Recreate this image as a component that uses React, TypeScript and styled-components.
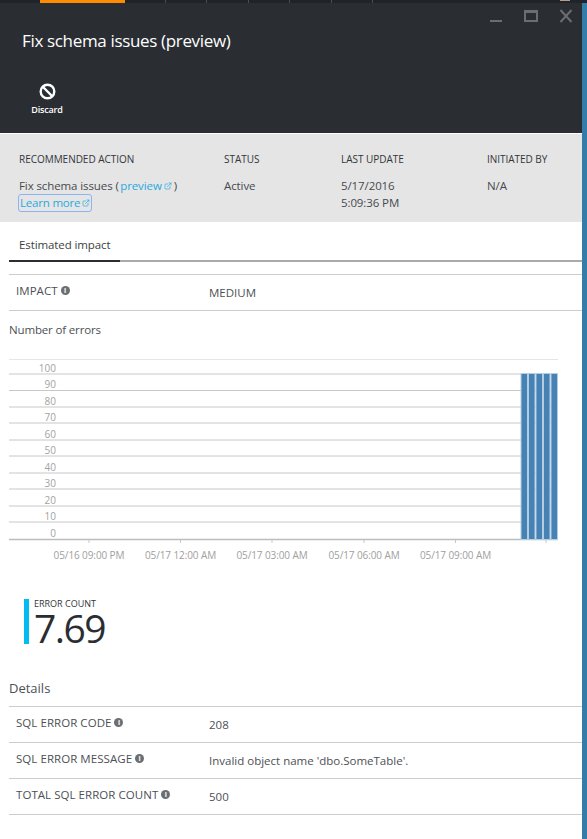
import React from 'react';
import styled, { createGlobalStyle } from 'styled-components';
import { ExternalLink } from 'lucide-react';

const GlobalStyle = createGlobalStyle`
  html, body {
    margin: 0;
    padding: 0;
    background: #fff;
  }
  body {
    font-family: "Open Sans", "Liberation Sans", sans-serif;
    color: #3c3f42;
  }
`;

const Page = styled.div`
  width: 587px;
  height: 839px;
  overflow: hidden;
  display: flex;
  flex-direction: column;
`;

// strip of the portal's tab bar above the blade
const TopStrip = styled.div`
  height: 3px;
  flex: none;
  background: #1f2429;
  display: flex;
  padding-left: 40px;
`;

const TopActive = styled.div`
  width: 85px;
  background: #ff8c00;
  margin-right: 40px;
`;

const TopTick = styled.div`
  width: 40px;
  margin-right: 0.4px;
  border-left: 1px solid #4a4f54;
`;

const TopAvatar = styled.div`
  width: 10px;
  height: 1px;
  margin: 0 17px 0 auto;
  background: #b89a8a;
`;

const Blade = styled.div`
  flex: 1;
  display: grid;
  grid-template-columns: 582px 5px;
  min-height: 0;
`;

const EdgeStrip = styled.div`
  background: #347da8;
`;

const Main = styled.div`
  display: flex;
  flex-direction: column;
  min-width: 0;
`;

const Header = styled.header`
  height: 130px;
  background: #2a2e32;
  color: #fff;
  position: relative;
  padding: 27px 0 0 22px;
  box-sizing: border-box;
`;

const Title = styled.h1`
  margin: 0;
  font-size: 17px;
  line-height: 22px;
  font-weight: 400;
  letter-spacing: -0.34px;
`;

const WindowButtons = styled.div`
  position: absolute;
  top: 6px;
  right: 9px;
  display: flex;
  align-items: flex-start;
  gap: 21px;
`;

const CommandButton = styled.div`
  margin: 31px 0 0 3px;
  width: 44px;
  display: flex;
  flex-direction: column;
  align-items: center;
  gap: 4px;
`;

const CommandLabel = styled.span`
  font-size: 9px;
  line-height: 12px;
  font-weight: 600;
  letter-spacing: -0.15px;
`;

const Summary = styled.section`
  height: 88px;
  margin-top: 1px;
  background: #e5e5e5;
  box-sizing: border-box;
  padding: 19px 0 0 19px;
  display: grid;
  grid-template-columns: 205px 117px 146px 1fr;
  align-content: start;
`;

const SummaryColumn = styled.div`
  display: flex;
  flex-direction: column;
`;

const SummaryLabel = styled.div`
  font-size: 10px;
  line-height: 13px;
  color: #32363a;
  letter-spacing: -0.03px;
  margin-bottom: 11px;
`;

const SummaryValue = styled.div`
  font-size: 11.5px;
  line-height: 17px;
  color: #454a4f;
  letter-spacing: -0.1px;
  white-space: nowrap;
`;

const LinkText = styled.span`
  color: #27a9e1;
  display: inline-flex;
  align-items: center;
  gap: 2px;
  margin: 0 2px 0 1.5px;
`;

const FocusLink = styled.span`
  color: #27a9e1;
  display: inline-flex;
  align-items: center;
  gap: 2px;
  outline: 1.5px solid #8cb4f2;
  border-radius: 2px;
  padding: 0 1px 0 1px;
  height: 16px;
  letter-spacing: -0.2px;
`;

const Content = styled.div`
  padding-left: 9px;
  flex: 1;
  background: #fff;
`;

const TabBar = styled.div`
  height: 40px;
  box-sizing: border-box;
  border-bottom: 2px solid #aaaaaa;
  display: flex;
  margin-bottom: 12px;
`;

const Tab = styled.div`
  width: 111px;
  height: 40px;
  box-sizing: border-box;
  padding: 14px 0 0 10px;
  border-bottom: 2px solid #2a2e32;
  font-size: 11.5px;
  line-height: 17px;
  color: #3c3f42;
  letter-spacing: -0.1px;
`;

const Row = styled.div`
  height: 36px;
  box-sizing: border-box;
  border-bottom: 1px solid #cccccc;
  display: grid;
  grid-template-columns: 193px 1fr;
  align-items: start;
  padding-left: 7px;
`;

const RowsTop = styled.div`
  border-top: 1px solid #cccccc;
`;

const RowLabel = styled.div`
  margin-top: 7px;
  font-size: 11.5px;
  line-height: 17px;
  color: #4c5055;
  letter-spacing: 0.05px;
  display: flex;
  align-items: center;
  gap: 3px;
`;

const RowValue = styled.div`
  margin-top: 9px;
  font-size: 11.5px;
  line-height: 17px;
  color: #4c5055;
`;

const InfoDot = styled.span`
  width: 9px;
  height: 9px;
  border-radius: 50%;
  background: #6b6f73;
  color: #fff;
  font-size: 7px;
  line-height: 9px;
  font-weight: 700;
  text-align: center;
  letter-spacing: 0;
`;

const ErrorsTitle = styled.h2`
  margin: 10px 0 0;
  font-size: 11.5px;
  line-height: 17px;
  font-weight: 400;
  color: #4c5055;
  letter-spacing: -0.15px;
`;

const ChartSvg = styled.svg`
  display: block;
  margin-top: 17px;
`;

const Kpi = styled.div`
  margin: 34px 0 0 15px;
  height: 45px;
  border-left: 5px solid #00bcf2;
  padding-left: 5px;
  display: flex;
  flex-direction: column;
`;

const KpiLabel = styled.div`
  font-size: 9px;
  line-height: 10px;
  color: #32363a;
`;

const KpiValue = styled.div`
  font-size: 39px;
  line-height: 37px;
  font-weight: 500;
  color: #2a2e32;
  letter-spacing: -1.5px;
`;

const DetailsTitle = styled.h2`
  margin: 36px 0 9px;
  font-size: 13px;
  line-height: 17px;
  font-weight: 400;
  color: #4c5055;
`;

const gridYs = [374, 390.5, 407, 423, 440, 456, 473, 489, 506, 522];
const yLabels = ['100', '90', '80', '70', '60', '50', '40', '30', '20', '10', '0'];
const xTicks = [
  { x: 89, label: '05/16 09:00 PM' },
  { x: 180.5, label: '05/17 12:00 AM' },
  { x: 272, label: '05/17 03:00 AM' },
  { x: 364, label: '05/17 06:00 AM' },
  { x: 455.5, label: '05/17 09:00 AM' },
  { x: 546, label: '' },
];
const barXs = [521, 528.5, 536, 543.5, 551];

// chart is drawn in page x/y coordinates, viewBox maps them onto the svg
const Chart = () => {
  const top = 355;
  return (
    <ChartSvg width={573} height={210} viewBox={`9 ${top} 573 210`}>
      <line x1={9} x2={558} y1={359.5} y2={359.5} stroke="#e6e6e6" />
      {gridYs.map((y) => (
        <line key={y} x1={9} x2={558} y1={y} y2={y} stroke="#c8c8c8" />
      ))}
      <line x1={9} x2={558} y1={539.5} y2={539.5} stroke="#bdbdbd" strokeWidth={1.5} />
      {yLabels.map((label, i) => (
        <text
          key={label}
          x={56}
          y={372 + i * 16.45}
          textAnchor="end"
          fontSize={10}
          fill="#a3a3a3"
          fontFamily="Open Sans, sans-serif"
        >
          {label}
        </text>
      ))}
      {barXs.map((x) => (
        <rect key={x} x={x} y={373.5} width={6.5} height={166} fill="#4682b4" stroke="#b4cde3" strokeWidth={1} />
      ))}
      {xTicks.map((t) => (
        <g key={t.x}>
          <line x1={t.x} x2={t.x} y1={540} y2={543} stroke="#c8c8c8" />
          {t.label && (
            <text
              x={t.x}
              y={559}
              textAnchor="middle"
              fontSize={10}
              letterSpacing={-0.1}
              fill="#a0a0a0"
              fontFamily="Open Sans, sans-serif"
            >
              {t.label}
            </text>
          )}
        </g>
      ))}
    </ChartSvg>
  );
};

const Info = () => <InfoDot>i</InfoDot>;

const App = () => (
  <>
    <GlobalStyle />
    <Page>
      <TopStrip>
        <TopActive />
        {[0, 1, 2, 3, 4, 5].map((i) => (
          <TopTick key={i} />
        ))}
        <TopAvatar />
      </TopStrip>
      <Blade>
        <Main>
          <Header>
            <Title>Fix schema issues (preview)</Title>
            <WindowButtons>
              <svg width="14" height="14" viewBox="0 0 14 14">
                <rect x="1" y="11" width="12" height="2" fill="#6a6e72" />
              </svg>
              <svg width="14" height="14" viewBox="0 0 14 14">
                <path d="M0 1h14v12H0z M2 4v7h10V4z" fill="#6a6e72" fillRule="evenodd" />
              </svg>
              <svg width="14" height="14" viewBox="0 0 14 14">
                <path d="M1.5 1L12.5 13M12.5 1L1.5 13" stroke="#6a6e72" strokeWidth="2" fill="none" />
              </svg>
            </WindowButtons>
            <CommandButton>
              <svg width="17" height="17" viewBox="0 0 17 17">
                <circle cx="8.5" cy="8.5" r="6.8" stroke="#fff" strokeWidth="2.4" fill="none" />
                <line x1="4" y1="4" x2="13" y2="13" stroke="#fff" strokeWidth="2.4" />
              </svg>
              <CommandLabel>Discard</CommandLabel>
            </CommandButton>
          </Header>
          <Summary>
            <SummaryColumn>
              <SummaryLabel>RECOMMENDED ACTION</SummaryLabel>
              <SummaryValue>
                Fix schema issues (
                <LinkText>
                  preview <ExternalLink size={8} />
                </LinkText>
                )
              </SummaryValue>
              <SummaryValue>
                <FocusLink>
                  Learn more <ExternalLink size={8} />
                </FocusLink>
              </SummaryValue>
            </SummaryColumn>
            <SummaryColumn>
              <SummaryLabel>STATUS</SummaryLabel>
              <SummaryValue>Active</SummaryValue>
            </SummaryColumn>
            <SummaryColumn>
              <SummaryLabel>LAST UPDATE</SummaryLabel>
              <SummaryValue>5/17/2016</SummaryValue>
              <SummaryValue>5:09:36 PM</SummaryValue>
            </SummaryColumn>
            <SummaryColumn>
              <SummaryLabel>INITIATED BY</SummaryLabel>
              <SummaryValue>N/A</SummaryValue>
            </SummaryColumn>
          </Summary>
          <Content>
            <TabBar>
              <Tab>Estimated impact</Tab>
            </TabBar>
            <RowsTop>
              <Row>
                <RowLabel>
                  IMPACT <Info />
                </RowLabel>
                <RowValue>MEDIUM</RowValue>
              </Row>
            </RowsTop>
            <ErrorsTitle>Number of errors</ErrorsTitle>
            <Chart />
            <Kpi>
              <KpiLabel>ERROR COUNT</KpiLabel>
              <KpiValue>7.69</KpiValue>
            </Kpi>
            <DetailsTitle>Details</DetailsTitle>
            <RowsTop>
              <Row>
                <RowLabel>
                  SQL ERROR CODE <Info />
                </RowLabel>
                <RowValue>208</RowValue>
              </Row>
              <Row>
                <RowLabel>
                  SQL ERROR MESSAGE <Info />
                </RowLabel>
                <RowValue>Invalid object name 'dbo.SomeTable'.</RowValue>
              </Row>
              <Row>
                <RowLabel>
                  TOTAL SQL ERROR COUNT <Info />
                </RowLabel>
                <RowValue>500</RowValue>
              </Row>
            </RowsTop>
          </Content>
        </Main>
        <EdgeStrip />
      </Blade>
    </Page>
  </>
);

export default App;
